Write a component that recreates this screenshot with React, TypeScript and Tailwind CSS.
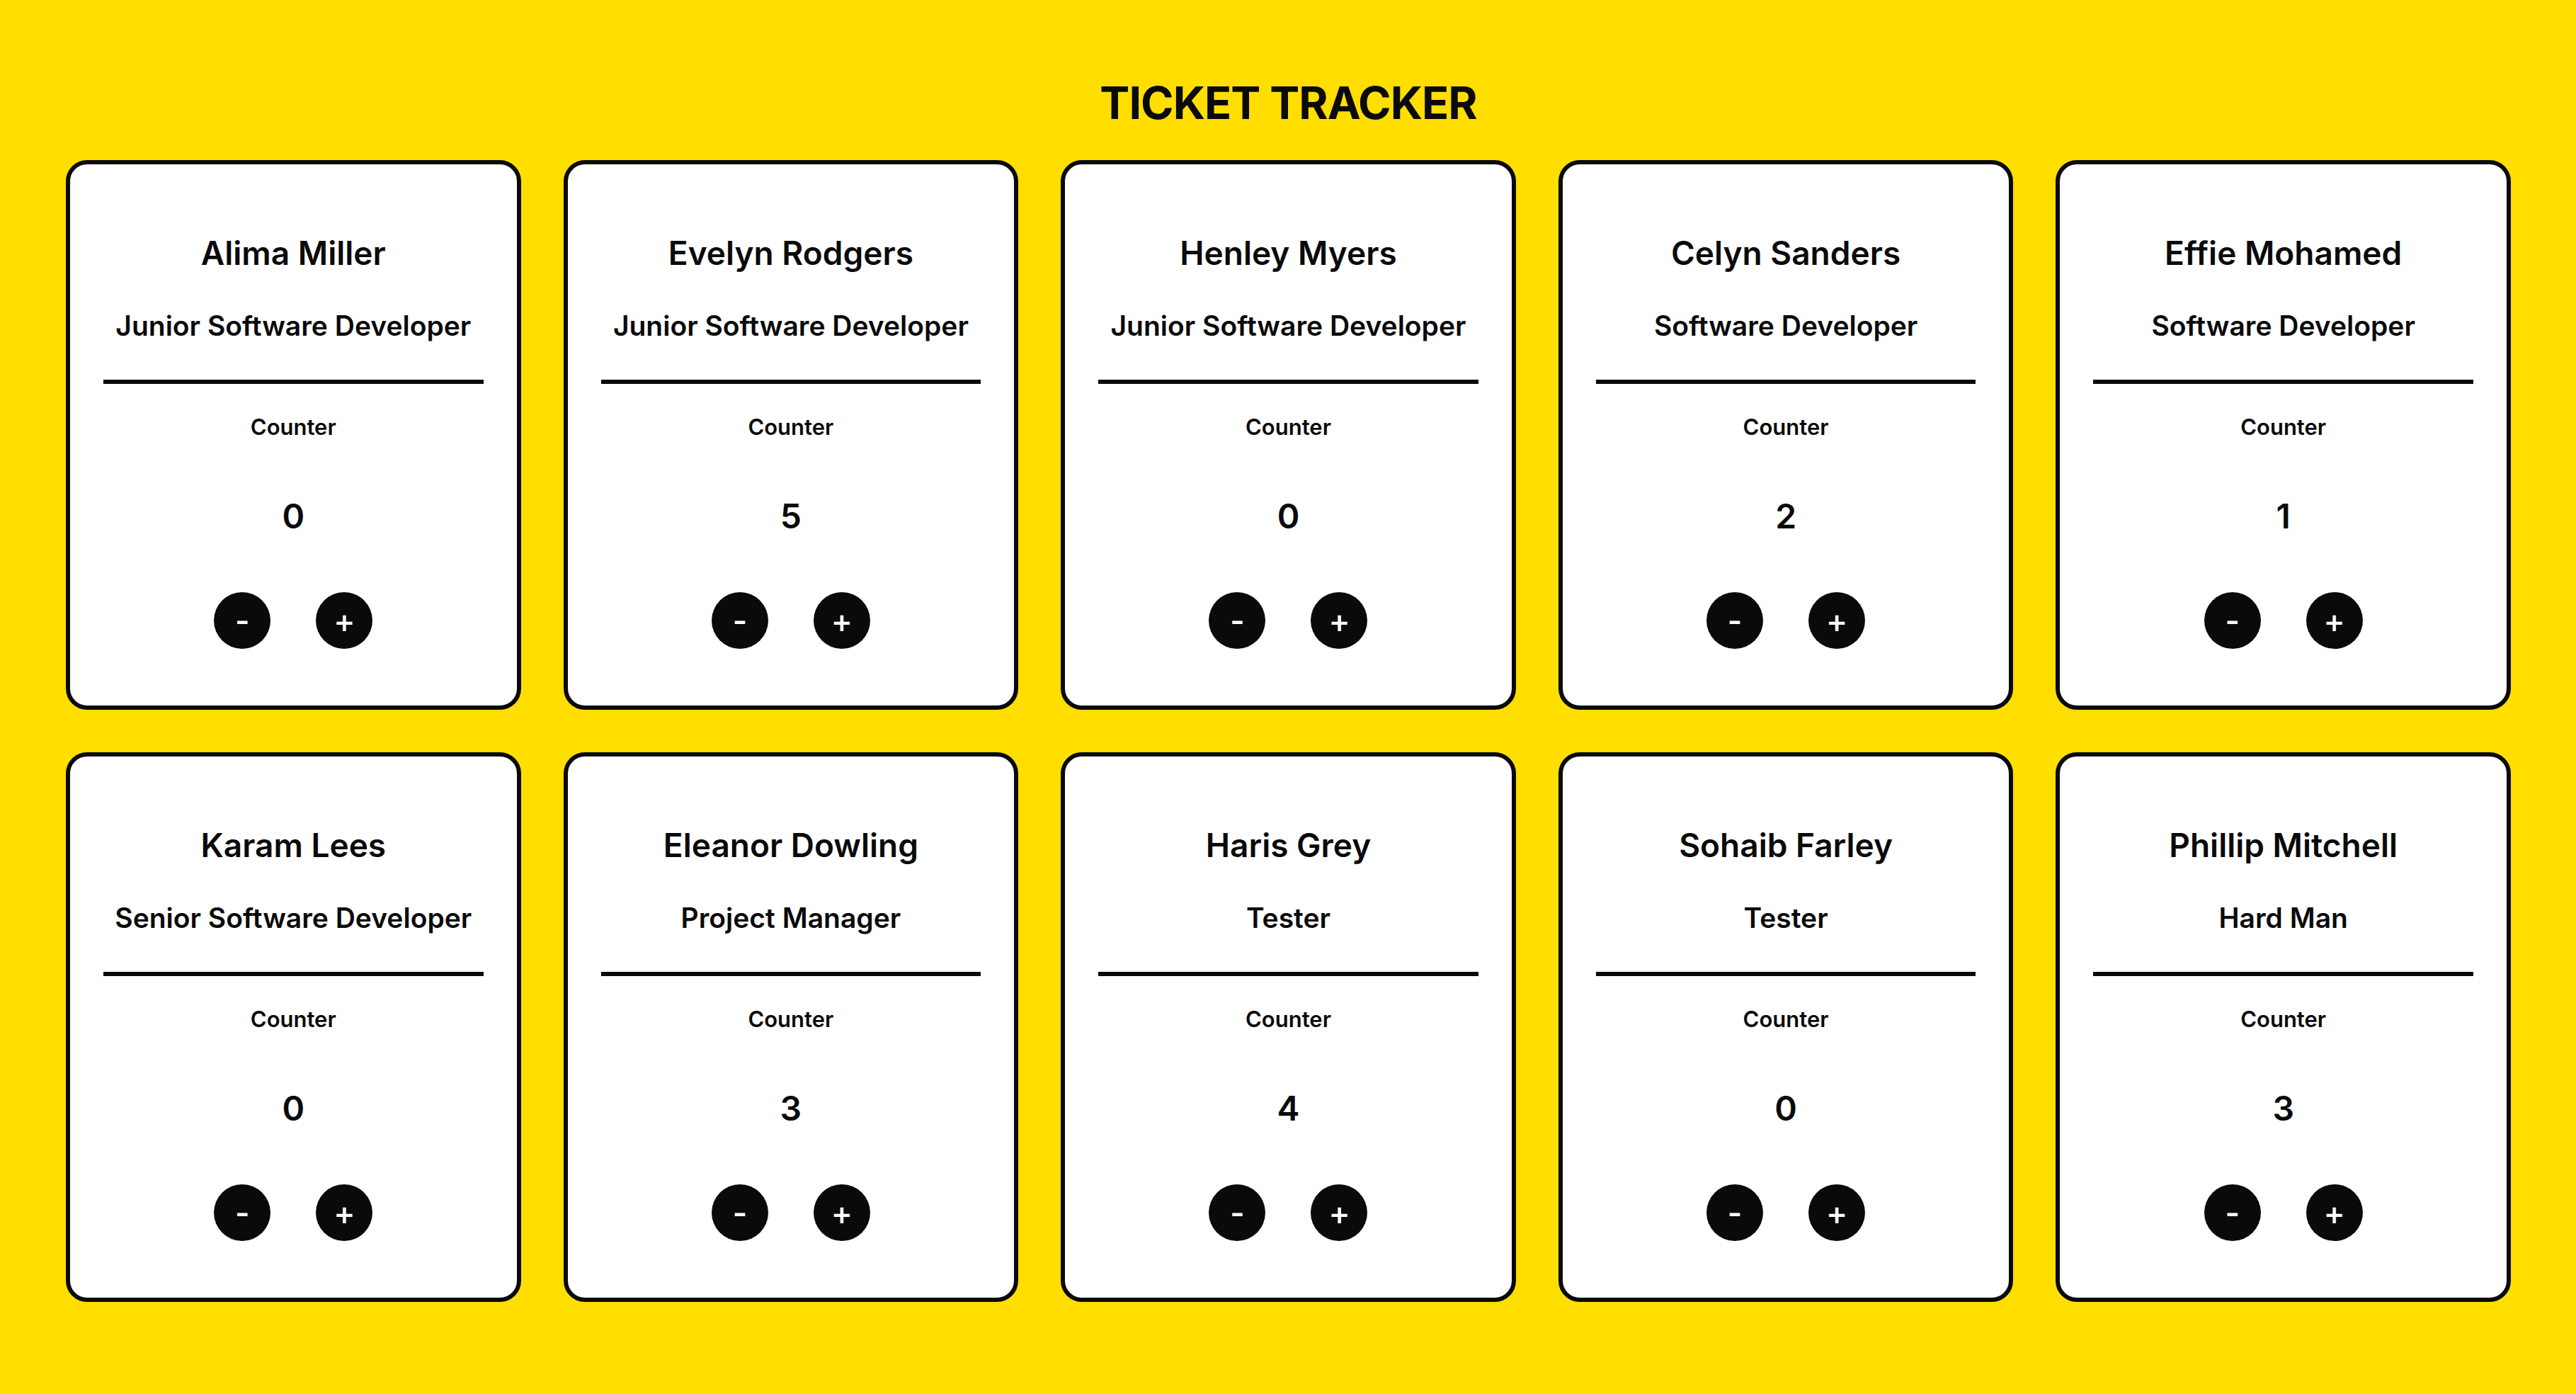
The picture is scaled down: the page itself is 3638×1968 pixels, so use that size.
import React from "react";

const people = [
  { name: "Alima Miller", role: "Junior Software Developer", count: 0 },
  { name: "Evelyn Rodgers", role: "Junior Software Developer", count: 5 },
  { name: "Henley Myers", role: "Junior Software Developer", count: 0 },
  { name: "Celyn Sanders", role: "Software Developer", count: 2 },
  { name: "Effie Mohamed", role: "Software Developer", count: 1 },
  { name: "Karam Lees", role: "Senior Software Developer", count: 0 },
  { name: "Eleanor Dowling", role: "Project Manager", count: 3 },
  { name: "Haris Grey", role: "Tester", count: 4 },
  { name: "Sohaib Farley", role: "Tester", count: 0 },
  { name: "Phillip Mitchell", role: "Hard Man", count: 3 },
];

function Card({ name, role, count }: { name: string; role: string; count: number }) {
  return (
    <div className="flex flex-col items-center rounded-[30px] border-[6px] border-[#0a0a0a] bg-white px-[47px] pt-[97px] pb-[80px] text-[#0a0a0a]">
      <h2 className="text-[46px] leading-[56px] font-semibold whitespace-nowrap">{name}</h2>
      <h3 className="mt-[51px] text-[39px] leading-[48px] font-semibold whitespace-nowrap">{role}</h3>
      <div className="mt-[52px] h-[6px] w-full bg-[#0a0a0a]" />
      <p className="mt-[43px] text-[31px] leading-[36px] font-semibold">Counter</p>
      <p className="mt-[79px] text-[48px] leading-[58px] font-semibold">{count}</p>
      <div className="mt-[78px] flex gap-[64px]">
        <button className="flex h-[80px] w-[80px] items-center justify-center rounded-full bg-[#0a0a0a] text-[44px] leading-none font-semibold text-white">
          -
        </button>
        <button className="flex h-[80px] w-[80px] items-center justify-center rounded-full bg-[#0a0a0a] text-[46px] leading-none font-medium text-white">
          +
        </button>
      </div>
    </div>
  );
}

export default function App() {
  return (
    <div
      className="min-h-screen w-full bg-[#FFDE00] pt-[107px] pb-[126px] pl-[93px] pr-[92px]"
      style={{ fontFamily: "Inter, 'Noto Sans', sans-serif" }}
    >
      <h1 className="text-center text-[63px] leading-[76px] font-bold text-[#0a0a0a] tracking-[-1px]">
        TICKET TRACKER
      </h1>
      <div className="mt-[43px] grid grid-cols-5 gap-[60px]">
        {people.map((p) => (
          <Card key={p.name} {...p} />
        ))}
      </div>
    </div>
  );
}
